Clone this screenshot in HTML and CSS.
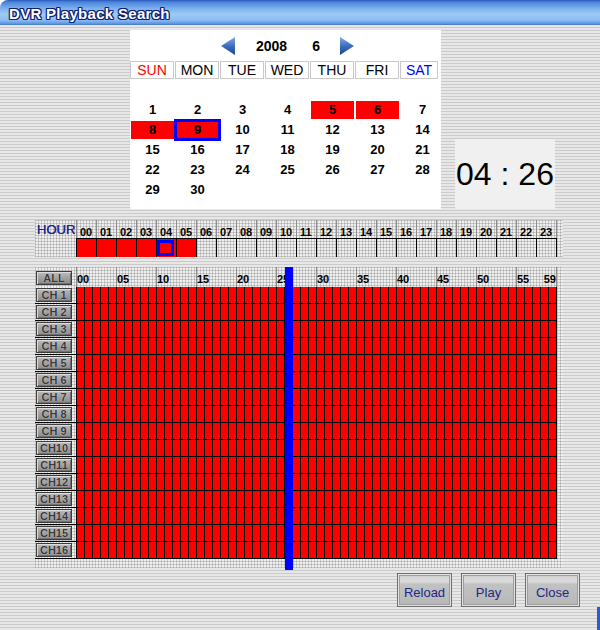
FILE: index.html
```html
<!DOCTYPE html>
<html>
<head>
<meta charset="utf-8">
<title>DVR Playback Search</title>
<link rel="stylesheet" href="styles.css">
</head>
<body>
<div class="window">
  <div class="titlebar"><span class="title">DVR Playback Search</span></div>
  <div class="content">
    <div class="top">
      <div class="calendar">
        <div class="nav">
          <span class="arrow"><svg width="14" height="18" viewBox="0 0 14 18"><defs><linearGradient id="agl" x1="0" y1="0" x2="0" y2="1"><stop offset="0" stop-color="#80aae4"/><stop offset="0.5" stop-color="#3d6fc0"/><stop offset="1" stop-color="#1a4490"/></linearGradient></defs><polygon points="14,0 0,9 14,18" fill="url(#agl)"/></svg></span>
          <span class="year">2008</span>
          <span class="month">6</span>
          <span class="arrow next"><svg width="14" height="18" viewBox="0 0 14 18"><defs><linearGradient id="agr" x1="0" y1="0" x2="0" y2="1"><stop offset="0" stop-color="#80aae4"/><stop offset="0.5" stop-color="#3d6fc0"/><stop offset="1" stop-color="#1a4490"/></linearGradient></defs><polygon points="0,0 14,9 0,18" fill="url(#agr)"/></svg></span>
        </div>
        <div class="weekdays">
          <span class="wd sun">SUN</span><span class="wd">MON</span><span class="wd">TUE</span><span class="wd">WED</span><span class="wd">THU</span><span class="wd">FRI</span><span class="wd sat">SAT</span>
        </div>
        <div class="days">
          <span class="day">1</span><span class="day">2</span><span class="day">3</span><span class="day">4</span><span class="day rec">5</span><span class="day rec">6</span><span class="day">7</span>
          <span class="day rec">8</span><span class="day rec sel">9</span><span class="day">10</span><span class="day">11</span><span class="day">12</span><span class="day">13</span><span class="day">14</span>
          <span class="day">15</span><span class="day">16</span><span class="day">17</span><span class="day">18</span><span class="day">19</span><span class="day">20</span><span class="day">21</span>
          <span class="day">22</span><span class="day">23</span><span class="day">24</span><span class="day">25</span><span class="day">26</span><span class="day">27</span><span class="day">28</span>
          <span class="day">29</span><span class="day">30</span>
        </div>
      </div>
      <div class="clock">04 : 26</div>
    </div>

    <div class="hour-panel texture">
      <div class="hour-labels">
        <span class="hour-title">HOUR</span>
        <span class="hl">00</span><span class="hl">01</span><span class="hl">02</span><span class="hl">03</span><span class="hl">04</span><span class="hl">05</span><span class="hl">06</span><span class="hl">07</span><span class="hl">08</span><span class="hl">09</span><span class="hl">10</span><span class="hl">11</span><span class="hl">12</span><span class="hl">13</span><span class="hl">14</span><span class="hl">15</span><span class="hl">16</span><span class="hl">17</span><span class="hl">18</span><span class="hl">19</span><span class="hl">20</span><span class="hl">21</span><span class="hl">22</span><span class="hl last">23</span>
      </div>
      <div class="hour-cells">
        <span class="hc-spacer"></span>
        <span class="hc rec"></span><span class="hc rec"></span><span class="hc rec"></span><span class="hc rec"></span><span class="hc sel"><span class="hc-mark"></span></span><span class="hc rec"></span><span class="hc"></span><span class="hc"></span><span class="hc"></span><span class="hc"></span><span class="hc"></span><span class="hc"></span><span class="hc"></span><span class="hc"></span><span class="hc"></span><span class="hc"></span><span class="hc"></span><span class="hc"></span><span class="hc"></span><span class="hc"></span><span class="hc"></span><span class="hc"></span><span class="hc"></span><span class="hc last"></span>
      </div>
    </div>

    <div class="grid-panel texture">
      <div class="grid-head">
        <div class="lab-col"><span class="chbtn">ALL</span></div>
        <span class="ml">00</span><span class="ml">05</span><span class="ml">10</span><span class="ml">15</span><span class="ml">20</span><span class="ml">25</span><span class="ml">30</span><span class="ml">35</span><span class="ml">40</span><span class="ml">45</span><span class="ml">50</span><span class="ml last"><span>55</span><span>59</span></span>
      </div>
      <div class="row"><div class="lab-col"><span class="chbtn">CH 1</span></div><div class="cells"></div></div>
      <div class="row"><div class="lab-col"><span class="chbtn">CH 2</span></div><div class="cells"></div></div>
      <div class="row"><div class="lab-col"><span class="chbtn">CH 3</span></div><div class="cells"></div></div>
      <div class="row"><div class="lab-col"><span class="chbtn">CH 4</span></div><div class="cells"></div></div>
      <div class="row"><div class="lab-col"><span class="chbtn">CH 5</span></div><div class="cells"></div></div>
      <div class="row"><div class="lab-col"><span class="chbtn">CH 6</span></div><div class="cells"></div></div>
      <div class="row"><div class="lab-col"><span class="chbtn">CH 7</span></div><div class="cells"></div></div>
      <div class="row"><div class="lab-col"><span class="chbtn">CH 8</span></div><div class="cells"></div></div>
      <div class="row"><div class="lab-col"><span class="chbtn">CH 9</span></div><div class="cells"></div></div>
      <div class="row"><div class="lab-col"><span class="chbtn">CH10</span></div><div class="cells"></div></div>
      <div class="row"><div class="lab-col"><span class="chbtn">CH11</span></div><div class="cells"></div></div>
      <div class="row"><div class="lab-col"><span class="chbtn">CH12</span></div><div class="cells"></div></div>
      <div class="row"><div class="lab-col"><span class="chbtn">CH13</span></div><div class="cells"></div></div>
      <div class="row"><div class="lab-col"><span class="chbtn">CH14</span></div><div class="cells"></div></div>
      <div class="row"><div class="lab-col"><span class="chbtn">CH15</span></div><div class="cells"></div></div>
      <div class="row"><div class="lab-col"><span class="chbtn">CH16</span></div><div class="cells"></div></div>
      <div class="cursor"></div>
    </div>

    <div class="actions">
      <button class="btn">Reload</button>
      <button class="btn">Play</button>
      <button class="btn">Close</button>
    </div>
  </div>
  <div class="corner"></div>
</div>
</body>
</html>
```
FILE: styles.css
```css
html, body {
  margin: 0;
  padding: 0;
}
body {
  width: 600px;
  height: 630px;
  overflow: hidden;
  background: #ffffff;
  font-family: "Liberation Sans", Arial, sans-serif;
  color: #000;
}
.window {
  position: relative;
  width: 600px;
  height: 630px;
  display: flex;
  flex-direction: column;
}
.titlebar {
  height: 23px;
  padding: 2px 0 0 9px;
  border-top-left-radius: 8px;
  background: linear-gradient(#2a58bc 0, #4a82da 2px, #78aeec 8px, #9ccaf6 14px, #8cbef2 20px, #5a90e0 24px, #3c6cc8 25px);
}
.title {
  font-weight: bold;
  font-size: 15px;
  letter-spacing: 0.3px;
  line-height: 23px;
  color: #ffffff;
  text-shadow: -1px 0 #0e1e70, 1px 0 #0e1e70, 0 -1px #0e1e70, 0 1px #0e1e70,
               -1px -1px #0e1e70, 1px 1px #0e1e70, -1px 1px #0e1e70, 1px -1px #0e1e70;
}
.content {
  flex: 1;
  display: flex;
  flex-direction: column;
  background: repeating-linear-gradient(#e7e7e7 0 2px, #cbcbcb 2px 3px);
}
.texture {
  background-color: #efefef;
  background-image: linear-gradient(90deg, rgba(0,0,0,0.16) 1px, transparent 1px),
                    linear-gradient(rgba(0,0,0,0.16) 1px, transparent 1px);
  background-size: 3px 3px;
}

/* calendar */
.top {
  display: flex;
  align-items: flex-end;
  margin: 5px 0 0 130px;
}
.calendar {
  width: 311px;
  height: 179px;
  background: #ffffff;
  overflow: hidden;
}
.nav {
  height: 31px;
  display: flex;
  align-items: center;
  padding-left: 91px;
}
.arrow svg {
  display: block;
}
.year {
  margin-left: 21px;
  font-weight: bold;
  font-size: 14px;
}
.month {
  margin-left: 25px;
  font-weight: bold;
  font-size: 14px;
}
.arrow.next {
  margin-left: 20px;
}
.weekdays {
  display: flex;
  gap: 1px;
}
.wd {
  width: 44px;
  height: 18px;
  box-sizing: border-box;
  border: 1px solid #c8c8c8;
  text-align: center;
  font-size: 14px;
  line-height: 16px;
}
.wd.sun { color: #ff0000; }
.wd.sat { color: #0000ff; width: 38px; }
.days {
  display: grid;
  grid-template-columns: repeat(7, 45px);
  grid-auto-rows: 20px;
  width: 315px;
  margin-top: 21px;
}
.day {
  margin: 1px;
  text-align: center;
  font-weight: bold;
  font-size: 13px;
  line-height: 18px;
}
.day.rec { background: #ff0000; }
.day.sel {
  outline: 3px solid #0000ff;
  outline-offset: -1px;
}
.clock {
  width: 100px;
  height: 70px;
  margin-left: 14px;
  background: #f0f0f0;
  text-align: center;
  font-size: 32px;
  line-height: 70px;
}

/* hour strip */
.hour-panel {
  width: 528px;
  height: 37px;
  margin: 11px 0 0 35px;
}
.hour-labels {
  display: flex;
  height: 18px;
}
.hour-title {
  width: 41px;
  box-sizing: border-box;
  padding: 1px 0 0 2px;
  color: #24248f;
  font-size: 13px;
  line-height: 18px;
  height: 18px;
  text-shadow: 0 0 0.6px #24248f;
}
.hl {
  width: 20px;
  box-sizing: border-box;
  border-left: 1px solid #8c8c8c;
  padding-left: 3px;
  display: flex;
  align-items: flex-end;
  font-weight: bold;
  font-size: 11px;
  line-height: 12px;
}
.hl.last {
  width: 21px;
  border-right: 1px solid #8c8c8c;
}
.hour-cells {
  display: flex;
  height: 19px;
}
.hc-spacer {
  width: 41px;
}
.hc {
  width: 20px;
  box-sizing: border-box;
  border-left: 1px solid #000;
  border-top: 1px solid #000;
}
.hc.last {
  width: 21px;
  border-right: 1px solid #000;
}
.hc.rec { background: #ff0000; }
.hc.sel {
  background: #ff0000;
  padding: 1px 2px 1px 0;
}
.hc-mark {
  display: block;
  height: 16px;
  box-sizing: border-box;
  border: 3px solid #0000ff;
  background: #ff0000;
}

/* channel grid */
.grid-panel {
  position: relative;
  width: 528px;
  height: 301px;
  margin: 10px 0 0 35px;
}
.grid-head {
  display: flex;
  height: 20px;
}
.lab-col {
  width: 41px;
  flex: none;
}
.grid-head .lab-col .chbtn {
  margin-top: 4px;
}
.ml {
  width: 40px;
  box-sizing: border-box;
  border-left: 1px solid #8c8c8c;
  display: flex;
  align-items: flex-end;
  padding-bottom: 2px;
  font-weight: bold;
  font-size: 11px;
  line-height: 12px;
}
.ml.last {
  width: 41px;
  border-right: 1px solid #8c8c8c;
  justify-content: space-between;
}
.chbtn {
  display: block;
  width: 36px;
  height: 14px;
  margin: 1px 0 0 1px;
  box-sizing: border-box;
  border: 1px solid #3c3c3c;
  background: linear-gradient(#bcbcbc, #a0a0a0 50%, #8c8c8c);
  box-shadow: inset 1px 1px 0 #dcdcdc, inset -1px -1px 0 #707070;
  text-align: center;
  font-weight: bold;
  font-size: 11px;
  line-height: 12px;
  color: #383838;
  text-shadow: 0 0 1px #e8e8e8;
}
.row {
  display: flex;
  width: 522px;
  height: 16px;
  border-bottom: 1px solid #000;
}
.cells {
  width: 481px;
  background: repeating-linear-gradient(90deg, #000 0 1px, #ff0000 1px 8px);
}
.cursor {
  position: absolute;
  left: 250px;
  top: 0;
  width: 8px;
  height: 303px;
  background: #0000ff;
}

/* buttons */
.actions {
  display: flex;
  justify-content: flex-end;
  gap: 9px;
  margin-top: 5px;
  padding-right: 20px;
}
.btn {
  width: 55px;
  height: 34px;
  box-sizing: border-box;
  margin: 0;
  padding: 5px 0 0 0;
  border: 1px solid #6e6e6e;
  background: linear-gradient(#b8b8b8 0, #d6d6d6 3px, #dcdcdc 8px, #c2c2c2 10px, #b6b6b6 100%);
  box-shadow: inset 0 0 0 1px #e2e2e2, inset 0 0 0 2px #9e9e9e;
  font-family: "Liberation Sans", Arial, sans-serif;
  font-size: 13px;
  color: #1c2784;
}
.corner {
  position: absolute;
  right: 0;
  bottom: 0;
  width: 3px;
  height: 23px;
  background: #2a5ccc;
}
```
